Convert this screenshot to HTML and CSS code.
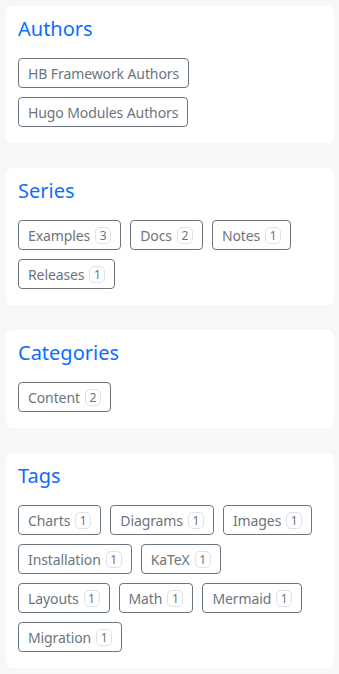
FILE: index.html
```html
<!DOCTYPE html>
<html lang="en">
<head>
    <meta charset="UTF-8">
    <meta name="viewport" content="width=device-width, initial-scale=1.0">
    <title>Taxonomies</title>
    <link rel="stylesheet" href="styles.css">
</head>
<body>
    <div class="sidebar">
        <!-- Authors -->
        <section class="panel">
            <h2 class="panel-title">Authors</h2>
            <div class="terms">
                <a href="#" class="term">HB Framework Authors</a>
                <a href="#" class="term">Hugo Modules Authors</a>
            </div>
        </section>

        <!-- Series -->
        <section class="panel">
            <h2 class="panel-title">Series</h2>
            <div class="terms">
                <a href="#" class="term">Examples <span class="count">3</span></a>
                <a href="#" class="term">Docs <span class="count">2</span></a>
                <a href="#" class="term">Notes <span class="count">1</span></a>
                <a href="#" class="term">Releases <span class="count">1</span></a>
            </div>
        </section>

        <!-- Categories -->
        <section class="panel">
            <h2 class="panel-title">Categories</h2>
            <div class="terms">
                <a href="#" class="term">Content <span class="count">2</span></a>
            </div>
        </section>

        <!-- Tags -->
        <section class="panel">
            <h2 class="panel-title">Tags</h2>
            <div class="terms">
                <a href="#" class="term">Charts <span class="count">1</span></a>
                <a href="#" class="term">Diagrams <span class="count">1</span></a>
                <a href="#" class="term">Images <span class="count">1</span></a>
                <a href="#" class="term">Installation <span class="count">1</span></a>
                <a href="#" class="term">KaTeX <span class="count">1</span></a>
                <a href="#" class="term">Layouts <span class="count">1</span></a>
                <a href="#" class="term">Math <span class="count">1</span></a>
                <a href="#" class="term">Mermaid <span class="count">1</span></a>
                <a href="#" class="term">Migration <span class="count">1</span></a>
            </div>
        </section>
    </div>
</body>
</html>
```

FILE: styles.css
```css
body {
    font-family: "Noto Sans", sans-serif;
    margin: 0;
    padding: 0;
    background-color: #f6f7f9;
}

.sidebar {
    padding: 6px 5px 6px 6px;
    display: flex;
    flex-direction: column;
    gap: 25px;
}

.panel {
    background-color: #fff;
    border-radius: 6px;
    padding: 11px 12px 16px;
}

.panel-title {
    color: #0d6efd;
    font-size: 20px;
    font-weight: 400;
    line-height: 24px;
    margin: 0 0 17px;
}

.terms {
    display: flex;
    flex-wrap: wrap;
    row-gap: 9px;
}

.term {
    display: flex;
    align-items: center;
    gap: 5px;
    height: 30px;
    box-sizing: border-box;
    margin-right: 9px;
    padding: 0 9px;
    border: 1px solid #6c757d;
    border-radius: 4px;
    color: #6c757d;
    font-size: 14px;
    letter-spacing: -0.1px;
    text-decoration: none;
}

.count {
    display: inline-block;
    min-width: 16px;
    height: 17px;
    box-sizing: border-box;
    border: 1px solid #dee2e6;
    border-radius: 5px;
    font-size: 12px;
    line-height: 15px;
    letter-spacing: 0;
    text-align: center;
}
```
